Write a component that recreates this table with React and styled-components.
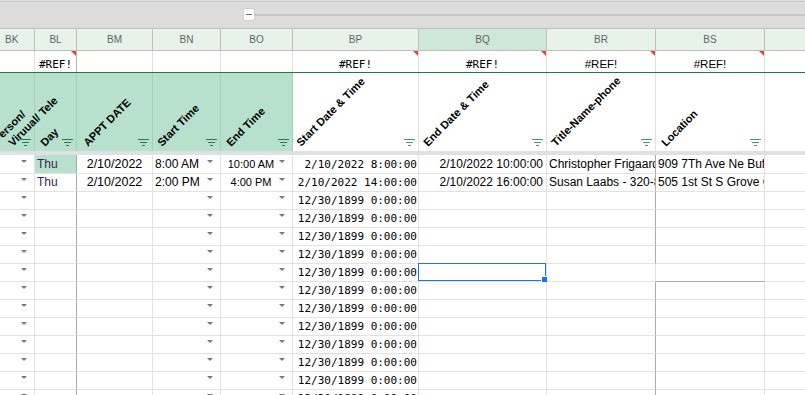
import React from 'react'
import styled, { createGlobalStyle } from 'styled-components'

const GlobalStyle = createGlobalStyle`
  html, body {
    margin: 0;
    padding: 0;
    background: #fff;
  }
  body {
    font-family: "Liberation Sans", Arial, sans-serif;
    overflow: hidden;
  }
`

const SANS = '"Liberation Sans", Arial, sans-serif'
const MONO = '"DejaVu Sans Mono", "Liberation Mono", monospace'

const columns = [
    { key: 'bk', letter: 'BK', width: 35 },
    { key: 'bl', letter: 'BL', width: 42 },
    { key: 'bm', letter: 'BM', width: 76 },
    { key: 'bn', letter: 'BN', width: 68 },
    { key: 'bo', letter: 'BO', width: 72 },
    { key: 'bp', letter: 'BP', width: 126 },
    { key: 'bq', letter: 'BQ', width: 128 },
    { key: 'br', letter: 'BR', width: 109 },
    { key: 'bs', letter: 'BS', width: 109 },
    { key: 'bt', letter: '', width: 100 },
]
const gridCols = columns.map(c => c.width + 'px').join(' ')

const Sheet = styled.div`
    width: 805px;
    height: 395px;
    overflow: hidden;
    display: flex;
    flex-direction: column;
`

const GroupBar = styled.div`
    flex: none;
    height: 27px;
    border-bottom: 1px solid #bfbfbf;
    background: linear-gradient(#dcdcdc 0 1px, #c6c6c6 1px 2px, #dcdcdc 2px);
    display: flex;
    align-items: center;
    padding: 1px 0 0 244px;
    box-sizing: content-box;
`

const Collapse = styled.div`
    flex: none;
    width: 10px;
    height: 11px;
    background: #fff;
    border-radius: 2px;
    box-shadow: 0 0 0 1px #d0d0d0;
    display: flex;
    align-items: center;
    justify-content: center;

    &::after {
        content: '';
        width: 6px;
        height: 1px;
        background: #6f6f6f;
    }
`

const Track = styled.div`
    flex: 1;
    height: 2px;
    background: #c6c6c6;
`

const Row = styled.div`
    flex: none;
    display: grid;
    grid-template-columns: ${gridCols};
    height: ${p => p.$h}px;
    box-sizing: border-box;
`

const LetterRow = styled(Row)`
    border-bottom: 1px solid #c0c0c0;
`

const LetterCell = styled.div`
    background: ${p => p.$sel ? '#cee7d6' : '#e7f3e9'};
    border-right: 1px solid #c0c0c0;
    color: #5f6368;
    font: 10px ${SANS};
    display: flex;
    align-items: center;
    justify-content: ${p => p.$left ? 'flex-start' : 'center'};
    padding-left: ${p => p.$left ? '5px' : '0'};
`

const RefRow = styled(Row)`
    border-bottom: 1px solid #25773f;
`

const RefCell = styled.div`
    position: relative;
    border-right: 1px solid ${p => p.$dark ? '#b5b5b5' : '#e2e2e2'};
    display: flex;
    align-items: flex-end;
    justify-content: center;
    line-height: 15px;
    font-size: ${p => p.$mono ? '11px' : '11.5px'};
    font-family: ${p => p.$mono ? MONO : SANS};
    color: #000;

    &::after {
        content: '';
        display: ${p => p.$flag ? 'block' : 'none'};
        position: absolute;
        top: 0;
        right: 0;
        width: 0;
        height: 0;
        border-top: 5px solid #e0463b;
        border-left: 5px solid transparent;
    }
`

const LabelCell = styled.div`
    background: ${p => p.$green ? '#b7e1cd' : '#fff'};
    border-right: 1px solid ${p => p.$green ? '#a2d2bb' : '#e2e2e2'};
    display: flex;
    align-items: flex-end;
    padding-left: ${p => p.$pl}px;
    min-width: 0;
`

const LabelBox = styled.div`
    flex: 1;
    min-width: 0;
    display: flex;
    align-items: flex-end;
    padding-bottom: 2px;
`

const Label = styled.span`
    display: inline-block;
    white-space: nowrap;
    transform-origin: 0 100%;
    transform: rotate(-45deg);
    font: 700 11px/13px ${SANS};
    color: #000;
`

const LabelLine = styled.span`
    display: block;
    margin-left: ${p => p.$shift || 0}px;
`

const FilterSvg = styled.svg`
    flex: none;
    margin: 0 3px 5px 0;
    fill: ${p => p.$dark ? '#2f7656' : '#3da463'};
`

const Divider = styled.div`
    flex: none;
    height: 4px;
    background: #dfe0e4;
`

const DataCell = styled.div`
    position: relative;
    display: flex;
    align-items: flex-end;
    padding-bottom: 1px;
    min-width: 0;
    background: ${p => p.$fill ? '#b7e1cd' : '#fff'};
    border-right: 1px solid ${p => p.$dark ? '#ababab' : '#e2e2e2'};
    border-bottom: 1px solid ${p => p.$darkBottom ? '#ababab' : '#e2e2e2'};
    font-family: ${p => p.$mono ? MONO : SANS};
    font-size: ${p => p.$size || 12}px;
    line-height: 15px;
    color: ${p => p.$color || '#000'};
`

const CellText = styled.span`
    flex: 1;
    min-width: 0;
    overflow: hidden;
    white-space: nowrap;
    text-align: ${p => p.$align || 'left'};
    padding-left: ${p => p.$pl ?? 2}px;
    padding-right: ${p => p.$pr ?? 2}px;
`

const Caret = styled.span`
    flex: none;
    align-self: flex-end;
    width: 0;
    height: 0;
    margin: 0 7px 9px 0;
    border-left: 3px solid transparent;
    border-right: 3px solid transparent;
    border-top: 3px solid #787878;
`

const Selection = styled.div`
    position: absolute;
    top: -1px;
    left: -1px;
    right: 0;
    bottom: 0;
    border: 1px solid #1a73e8;
    pointer-events: none;
`

const Handle = styled.div`
    position: absolute;
    right: -3px;
    bottom: -3px;
    width: 6px;
    height: 6px;
    background: #1a73e8;
    box-shadow: 0 0 0 1px #fff;
`

const Filter = ({ dark }) => (
    <FilterSvg $dark={dark} width="11" height="7" viewBox="0 0 11 7">
        <rect x="0" y="0" width="11" height="1" />
        <rect x="2" y="3" width="7" height="1" />
        <rect x="4" y="6" width="3" height="1" />
    </FilterSvg>
)

const labels = [
    { key: 'bk', pl: 15, green: true, lines: [['In-Person/', -22], ['Viruual/ Tele', 0]] },
    { key: 'bl', pl: 12, green: true, text: 'Day' },
    { key: 'bm', pl: 13, green: true, text: 'APPT DATE' },
    { key: 'bn', pl: 11, green: true, text: 'Start Time' },
    { key: 'bo', pl: 12, green: true, text: 'End Time' },
    { key: 'bp', pl: 10, text: 'Start Date & Time' },
    { key: 'bq', pl: 11, text: 'End Date & Time' },
    { key: 'br', pl: 11, text: 'Title-Name-phone' },
    { key: 'bs', pl: 12, text: 'Location' },
    { key: 'bt', pl: 0, text: '', noFilter: true },
]

const refFlags = {
    bl: { mono: true, flag: true, dark: true },
    bp: { mono: true, flag: true },
    bq: { mono: true, flag: true },
    br: { flag: true },
    bs: { flag: true },
}

const EMPTY_DATE = '12/30/1899 0:00:00'

const rows = [
    {
        bl: 'Thu', blFill: true, bm: '2/10/2022', bn: '8:00 AM', bo: '10:00 AM',
        bp: '2/10/2022 8:00:00', bq: '2/10/2022 10:00:00',
        br: 'Christopher Frigaard', bs: '909 7Th Ave Ne Buffalo',
    },
    {
        bl: 'Thu', bm: '2/10/2022', bn: '2:00 PM', bo: '4:00 PM',
        bp: '2/10/2022 14:00:00', bq: '2/10/2022 16:00:00',
        br: 'Susan Laabs - 320-8', bs: '505 1st St S Grove City',
    },
    ...Array.from({ length: 12 }, () => ({ bp: EMPTY_DATE })),
]

const SELECTED_ROW = 6

const DataRow = ({ row, index }) => {
    const sel = index === SELECTED_ROW
    return (
        <Row $h={index === 0 ? 19 : 18}>
            <DataCell>
                <CellText />
                <Caret />
            </DataCell>
            <DataCell $dark $fill={row.blFill} $size={12} $color="#3e1d57">
                <CellText>{row.bl}</CellText>
            </DataCell>
            <DataCell $size={12.5}>
                <CellText $align="center">{row.bm}</CellText>
            </DataCell>
            <DataCell $size={12}>
                <CellText>{row.bn}</CellText>
                <Caret />
            </DataCell>
            <DataCell $size={11}>
                <CellText $align="center" $pr={0}>{row.bo}</CellText>
                <Caret />
            </DataCell>
            <DataCell $mono $size={11}>
                <CellText $align="right" $pr={1} $pl={0}>{row.bp}</CellText>
            </DataCell>
            <DataCell $size={12}>
                <CellText $align="right" $pr={3}>{row.bq}</CellText>
                {sel && <Selection><Handle /></Selection>}
            </DataCell>
            <DataCell $dark={!sel}>
                <CellText $pr={0}>{row.br}</CellText>
            </DataCell>
            <DataCell $darkBottom={sel}>
                <CellText $pr={0}>{row.bs}</CellText>
            </DataCell>
            <DataCell />
        </Row>
    )
}

export default function App() {
    return (
        <>
            <GlobalStyle />
            <Sheet>
                <GroupBar>
                    <Collapse />
                    <Track />
                </GroupBar>

                <LetterRow $h={22}>
                    {columns.map(c => (
                        <LetterCell key={c.key} $sel={c.key === 'bq'} $left={c.key === 'bk'}>
                            {c.letter}
                        </LetterCell>
                    ))}
                </LetterRow>

                <RefRow $h={22}>
                    {columns.map(c => {
                        const f = refFlags[c.key]
                        return (
                            <RefCell key={c.key} $mono={f?.mono} $flag={f?.flag} $dark={f?.dark}>
                                {f ? '#REF!' : ''}
                            </RefCell>
                        )
                    })}
                </RefRow>

                <Row $h={78}>
                    {labels.map(l => (
                        <LabelCell key={l.key} $green={l.green} $pl={l.pl}>
                            <LabelBox>
                                {l.lines ? (
                                    <Label>
                                        {l.lines.map(([t, shift]) => (
                                            <LabelLine key={t} $shift={shift}>{t}</LabelLine>
                                        ))}
                                    </Label>
                                ) : (
                                    l.text && <Label>{l.text}</Label>
                                )}
                            </LabelBox>
                            {!l.noFilter && <Filter dark={l.green} />}
                        </LabelCell>
                    ))}
                </Row>

                <Divider />

                {rows.map((r, i) => (
                    <DataRow key={i} row={r} index={i} />
                ))}
            </Sheet>
        </>
    )
}
